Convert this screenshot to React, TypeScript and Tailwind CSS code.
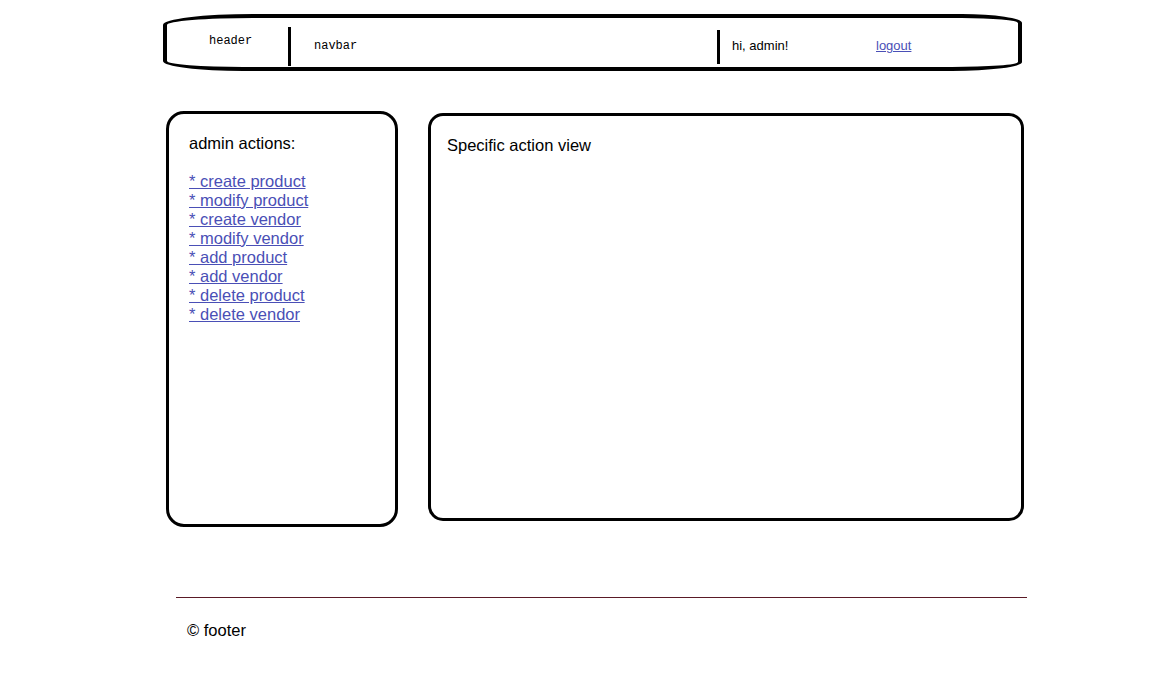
const actions = [
  "* create product",
  "* modify product",
  "* create vendor",
  "* modify vendor",
  "* add product",
  "* add vendor",
  "* delete product",
  "* delete vendor",
];

export default function App() {
  return (
    <div className="min-h-screen bg-white pl-[163px] pt-[14px] font-['Liberation_Sans',Arial,sans-serif] text-black">
      {/* header / navbar */}
      <header className="flex h-[57px] w-[859px] border-4 border-black rounded-tl-[90px_11px] rounded-bl-[80px_10px] rounded-tr-[60px_9px] rounded-br-[70px_9px]">
        <div className="w-[121px] pl-[42px] pt-[16px] font-['Liberation_Mono','DejaVu_Sans_Mono',monospace] text-[12px] leading-[14px]">
          header
        </div>
        <div className="mb-px mt-[9px] w-[3px] bg-black" />
        <div className="w-[426px] pl-[23px] pt-[21px] font-['Liberation_Mono','DejaVu_Sans_Mono',monospace] text-[12px] leading-[14px]">
          navbar
        </div>
        <div className="mb-[3px] mt-[12px] w-[3px] bg-black" />
        <div className="w-[156px] pl-[12px] pt-[20px] text-[13px] leading-[15px]">hi, admin!</div>
        <div className="pt-[20px] text-[13px] leading-[15px]">
          <a href="#" className="text-[#4a4fb6] underline">
            logout
          </a>
        </div>
      </header>

      {/* content */}
      <main className="mt-10 flex items-start">
        <aside className="ml-[3px] h-[416px] w-[232px] rounded-[18px] border-[3px] border-black pl-[20px] pt-[20px] text-[16.5px] leading-[19px]">
          <p>admin actions:</p>
          <ul className="mt-[19px]">
            {actions.map((a) => (
              <li key={a}>
                <a href="#" className="text-[#4a4fb6] underline decoration-[#4a4fb6]">
                  {a}
                </a>
              </li>
            ))}
          </ul>
        </aside>
        <section className="ml-[30px] mt-[2px] h-[408px] w-[596px] rounded-[15px] border-[3px] border-black pl-[16px] pt-[20px] text-[16.5px] leading-[19px]">
          Specific action view
        </section>
      </main>

      {/* footer */}
      <footer className="mt-[70px] ml-[13px] w-[851px]">
        <div className="h-px bg-[#5a1a26]" />
        <p className="mt-[23px] pl-[11px] text-[16.5px] leading-[19px]">© footer</p>
      </footer>
    </div>
  );
}
